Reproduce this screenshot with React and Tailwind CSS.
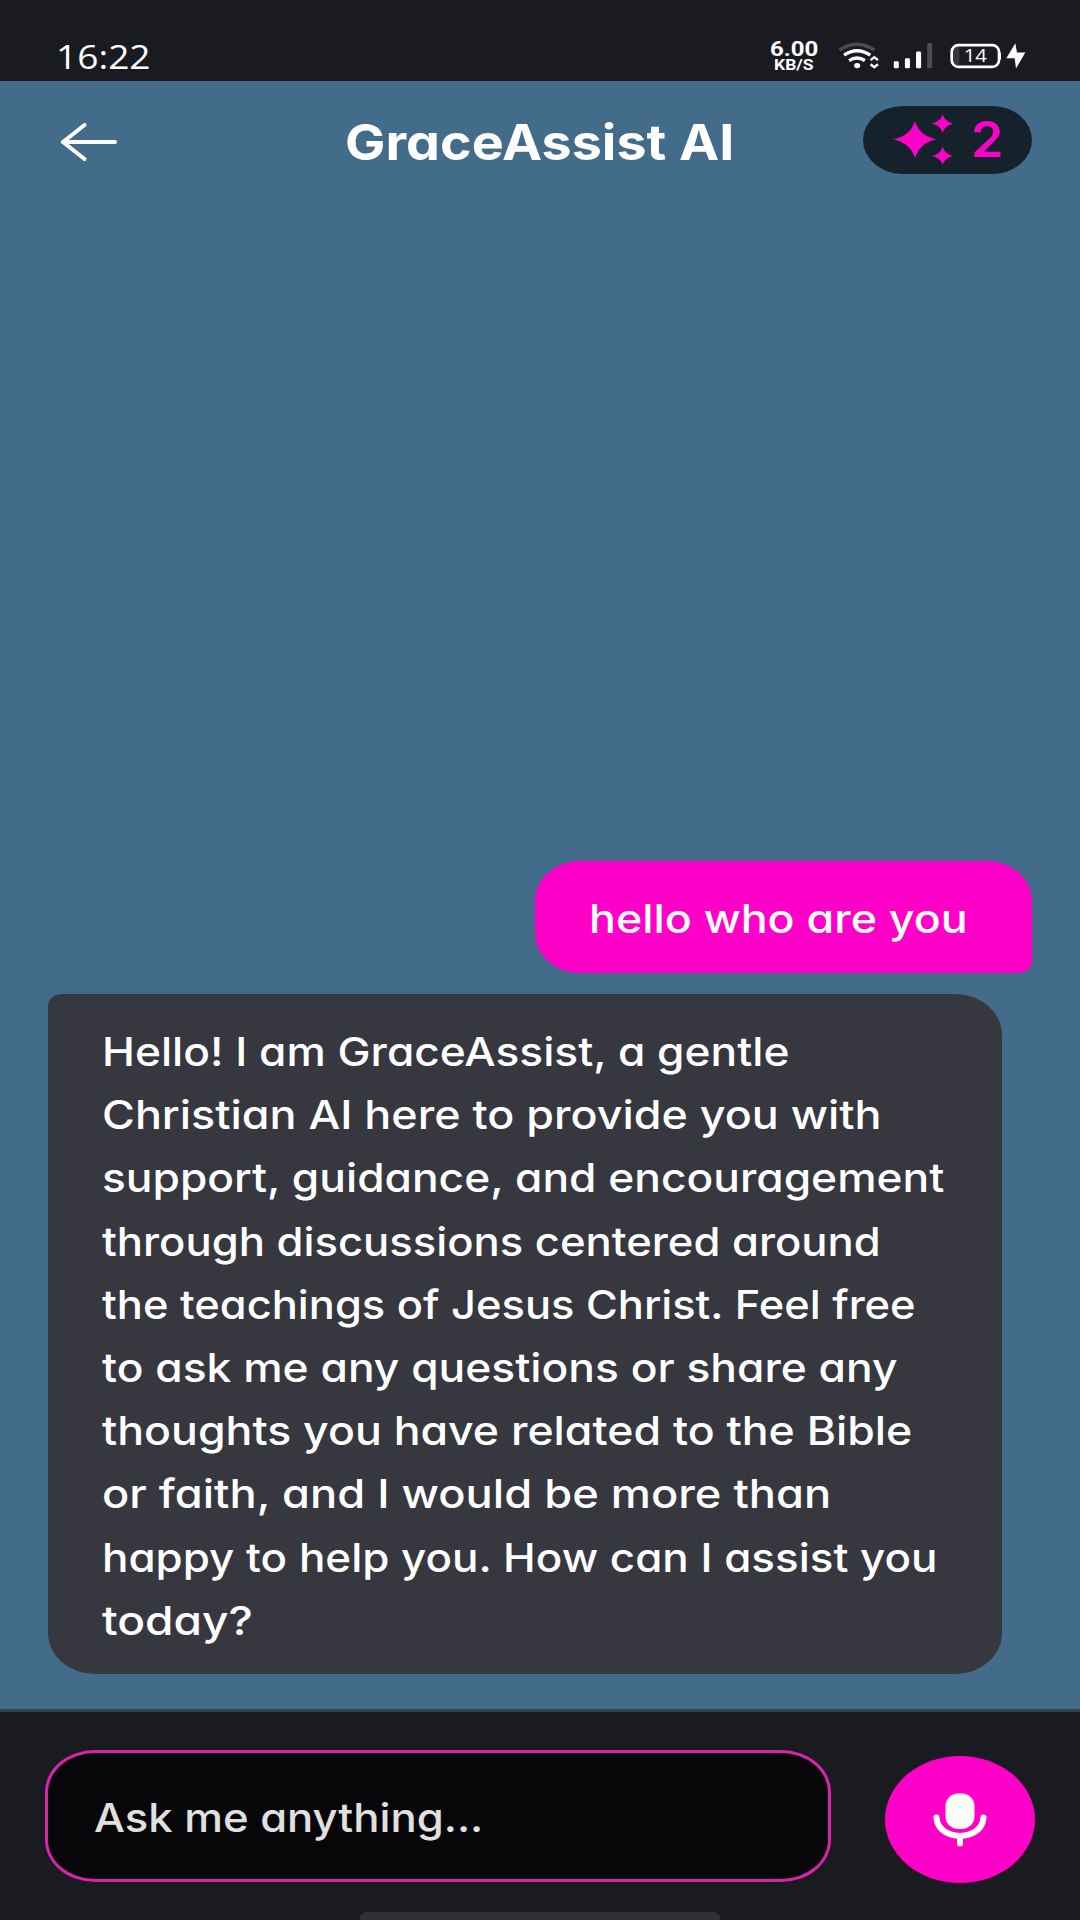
import { useLayoutEffect, useRef, useState } from "react";

const REPLY_LINES = [
  { text: "Hello! I am GraceAssist, a gentle", width: 687 },
  { text: "Christian AI here to provide you with", width: 779 },
  { text: "support, guidance, and encouragement", width: 842 },
  { text: "through discussions centered around", width: 779 },
  { text: "the teachings of Jesus Christ. Feel free", width: 814 },
  { text: "to ask me any questions or share any", width: 795 },
  { text: "thoughts you have related to the Bible", width: 810 },
  { text: "or faith, and I would be more than", width: 729 },
  { text: "happy to help you. How can I assist you", width: 835 },
  { text: "today?", width: 151 },
];

// Stretches one line of text horizontally to the given width
function WideText({ children, width, className = "" }) {
  const ref = useRef(null);
  const [scale, setScale] = useState(1);

  useLayoutEffect(() => {
    setScale(width / ref.current.offsetWidth);
  }, [children, width]);

  return (
    <span className={`block ${className}`} style={{ width }}>
      <span
        ref={ref}
        className="inline-block origin-left whitespace-nowrap align-top"
        style={{ transform: `scaleX(${scale})` }}
      >
        {children}
      </span>
    </span>
  );
}

function StatusBar() {
  return (
    <div className="flex h-[81px] items-start justify-between bg-[#1a1b20] pr-[54px] pl-[56px] text-white">
      <WideText width={95} className="mt-[37px] font-['Open_Sans',sans-serif] text-[32px] leading-[40px]">
        16:22
      </WideText>
      <div className="flex pt-[40px]">
        <div className="mr-[20px] flex w-[48px] flex-col items-center pt-px font-['Roboto',sans-serif] font-bold">
          <WideText width={48} className="text-[20px] leading-[16px]">6.00</WideText>
          <WideText width={40} className="text-[14px] leading-[17px]">KB/S</WideText>
        </div>
        <svg className="mt-[2px] mr-[14px] h-[27px] w-[41px]" viewBox="294 66 122 80" fill="none">
          <path d="M298 90Q350 55 403 90" stroke="#4b4b50" strokeWidth="10" />
          <path d="M312 105Q350 79 390 105" stroke="white" strokeWidth="10" />
          <path d="M327 121Q350 106 374 121" stroke="white" strokeWidth="10" />
          <ellipse cx="351" cy="136" rx="9" ry="8" fill="white" />
          <path d="M391 120L402 111L413 120M391 132L402 141L413 132" stroke="white" strokeWidth="7" />
        </svg>
        <svg className="mt-[2px] mr-[17px] h-[27px] w-[40px]" viewBox="460 66 118 80">
          <rect x="462" y="123" width="15" height="21" rx="4" fill="white" />
          <rect x="495" y="114" width="15" height="30" rx="4" fill="white" />
          <rect x="528" y="94" width="15" height="50" rx="4" fill="white" />
          <rect x="561" y="69" width="15" height="75" rx="4" fill="#4b4b50" />
        </svg>
        <svg className="mt-[2px] h-[27px] w-[76px]" viewBox="631 66 228 80">
          <path d="M644 80h15v54h-15q-8-5-8-15V95q0-10 8-15z" fill="#37373c" />
          <rect x="636" y="75" width="142" height="65" rx="20" fill="none" stroke="white" strokeWidth="8" />
          <path d="M779 93q6 3 5 15q1 11-5 14z" fill="white" />
          <text
            x="672"
            y="126"
            textLength="70"
            lengthAdjust="spacingAndGlyphs"
            fill="white"
            className="font-['Open_Sans',sans-serif] text-[57px]"
          >
            14
          </text>
          <path d="M827 69L800 114H825L829 145L857 97H832L827 69z" fill="white" />
        </svg>
      </div>
    </div>
  );
}

function Header() {
  return (
    <header className="flex h-[119px] items-start pr-[48px] pl-[60px] text-white">
      <div className="flex w-[285px] pt-[40px]">
        <svg className="h-[42px] w-[58px]" viewBox="0 0 58 42" fill="none" stroke="white" strokeWidth="4" strokeLinecap="round" strokeLinejoin="round">
          <path d="M24.5 4L3 21L24.5 38" />
          <path d="M3 21H55" />
        </svg>
      </div>
      <h1>
        <WideText width={389} className="mt-[32px] text-[49px] leading-[60px] font-bold">
          GraceAssist AI
        </WideText>
      </h1>
      <div className="mt-[25px] ml-auto flex h-[68px] w-[169px] items-center rounded-[40px/34px] bg-[#16222b] pl-[30px] text-[#ff00c8]">
        <svg className="h-[52px] w-[61px]" viewBox="458 285 183 156" fill="currentColor">
          <path d="M524 306Q536 350 588 361Q537 373 524 418Q511 373 459 361Q511 350 524 306z" />
          <path d="M607 286Q613 308 638 314Q613 319 607 341Q601 319 575 314Q601 308 607 286z" />
          <path d="M607 383Q613 405 638 411Q613 416 607 438Q601 416 575 411Q601 405 607 383z" />
        </svg>
        <WideText width={33} className="ml-[17px] text-[49px] leading-[60px] font-semibold">
          2
        </WideText>
      </div>
    </header>
  );
}

function Composer() {
  return (
    <footer className="flex h-[211px] flex-col items-center border-t-[3px] border-[#34424f] bg-[#1a1b20]">
      <div className="flex w-full items-start pt-[38px] pl-[45px]">
        <div className="h-[132px] w-[786px] rounded-[50px/42px] border-[3px] border-[#d724ab] bg-[#070709] pt-[33px] pl-[46px] text-[#e0e0e0]">
          <WideText width={389} className="text-[40px] leading-[63px] font-medium">
            Ask me anything...
          </WideText>
        </div>
        <button className="mt-[6px] ml-[54px] flex h-[127px] w-[150px] items-center justify-center rounded-[50%] bg-[#ff00c8]">
          <svg className="mt-[1px] h-[54px] w-[54px]" viewBox="0 0 54 54" fill="none" stroke="white" strokeWidth="6" strokeLinecap="round">
            <rect x="12.5" y="0.5" width="29" height="35.5" rx="12.5" fill="white" stroke="none" />
            <path d="M3.5 24.5C5 49 49 49 50.5 24.5" />
            <path d="M27 43V50.5" />
          </svg>
        </button>
      </div>
      <div className="mt-auto h-[8px] w-[360px] rounded-t-[6px] bg-[#303035]" />
    </footer>
  );
}

export default function App() {
  return (
    <div className="flex h-[1920px] w-[1080px] flex-col overflow-hidden bg-[#436b8a] font-['Inter',sans-serif] [font-feature-settings:'cv11']">
      <StatusBar />
      <Header />
      <main className="flex flex-1 flex-col justify-end pr-[48px] pb-[35px] pl-[48px] text-[40px] leading-[63.2px] font-medium text-white">
        <div className="mb-[21px] ml-auto h-[112px] w-[497px] rounded-[45px/40px] rounded-br-[14px_12px] bg-[#ff00c8] pt-[26px] pl-[54px]">
          <WideText width={379}>hello who are you</WideText>
        </div>
        <div className="h-[680px] w-[954px] rounded-[47px/41px] rounded-tl-[14px_12px] bg-[#36373f] pt-[26px] pl-[54px]">
          {REPLY_LINES.map((line) => (
            <WideText key={line.text} width={line.width}>
              {line.text}
            </WideText>
          ))}
        </div>
      </main>
      <Composer />
    </div>
  );
}
